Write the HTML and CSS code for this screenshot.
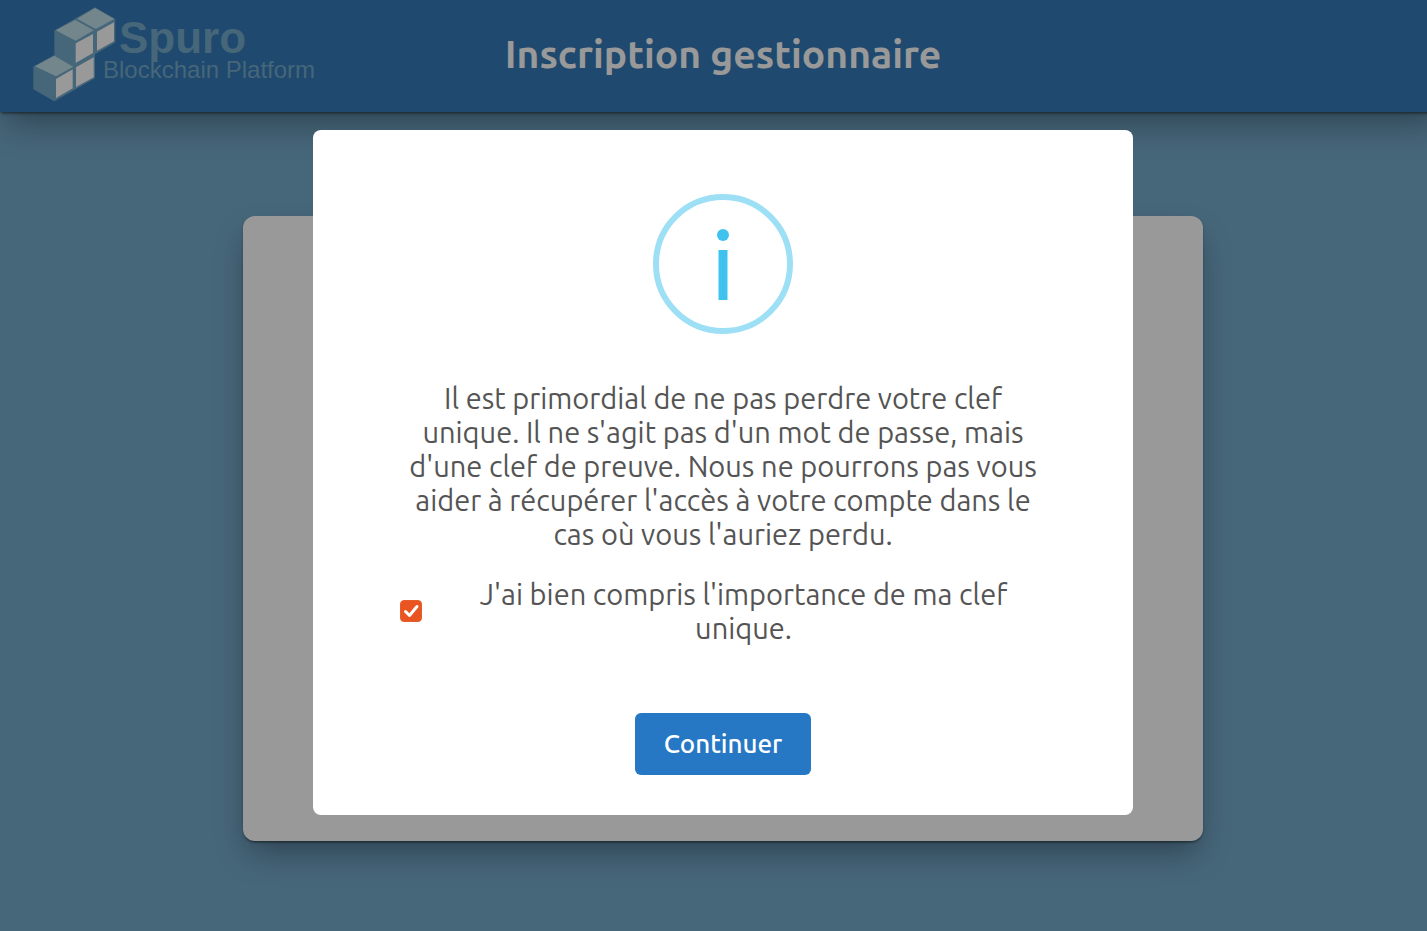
FILE: index.html
```
<!DOCTYPE html>
<html lang="fr">
<head>
<meta charset="utf-8">
<title>Inscription gestionnaire</title>
<link rel="stylesheet" href="styles.css">
</head>
<body>
<div class="page">
  <header class="header">
    <svg class="logo" viewBox="32 4 300 100" role="img" aria-label="Spuro Blockchain Platform">
      <path class="logo-side" d="M95 7.300 115.300 19V42.600L95 54.300V78.300L54.300 101.300 33.300 89.300V66.500L54.300 55V30.600z"/>
      <g class="logo-top">
        <path d="M95 8 114.300 19 95.700 29 77 18.700z"/>
        <path d="M75.300 20 93.700 30.300 75.700 40.700 55.700 30.300z"/>
        <path d="M54.300 55.700 73.300 66.700 56 76.300 35 66.300z"/>
      </g>
      <g class="logo-face">
        <path d="M97 31.700 114 22.300V41.300L97 50.700z"/>
        <path d="M75.700 43.300 93 34V53L75.700 63z"/>
        <path d="M76 67.300 93.700 57.300V77.300L76 87z"/>
        <path d="M56 79 72.700 69.300V88.300L56 98z"/>
      </g>
      <text class="logo-name" x="119" y="53">Spuro</text>
      <text class="logo-tagline" x="103" y="78">Blockchain Platform</text>
    </svg>
    <h1 class="title">Inscription gestionnaire</h1>
  </header>
  <main class="content">
    <section class="card"></section>
  </main>
</div>
<div class="overlay">
  <div class="modal" role="dialog" aria-modal="true" aria-describedby="message">
    <svg class="info-icon" viewBox="0 0 140 140" aria-hidden="true">
      <circle class="info-ring" cx="70" cy="70" r="67"/>
      <circle class="info-mark" cx="70" cy="41" r="6"/>
      <path class="info-mark" d="M65.500 56h9v50h-9z"/>
    </svg>
    <p class="message" id="message">Il est primordial de ne pas perdre votre clef unique. Il ne s'agit pas d'un mot de passe, mais d'une clef de preuve. Nous ne pourrons pas vous aider à récupérer l'accès à votre compte dans le cas où vous l'auriez perdu.</p>
    <div class="consent">
      <span class="check">
        <input class="check-input" type="checkbox" id="understood" checked>
        <svg class="check-mark" viewBox="0 0 22 22" aria-hidden="true"><path d="M5.500 11.500 9.500 15.500 17 6.500"/></svg>
      </span>
      <label class="consent-label" for="understood">J'ai bien compris l'importance de ma clef unique.</label>
    </div>
    <button class="confirm" type="button">Continuer</button>
  </div>
</div>
</body>
</html>
```
FILE: styles.css
```
* { box-sizing: border-box; }
body {
  margin: 0;
  min-height: 100vh;
  overflow: hidden;
  background: #75aacb;
  font-family: "Ubuntu", "Noto Sans", sans-serif;
}
.page { margin-right: -19px; }
.header {
  display: grid;
  grid-template-columns: 1fr auto 1fr;
  align-items: center;
  height: 112px;
  padding: 0 32px 4px;
  background: #347ab7;
  box-shadow: 0 2px 3px -1px rgba(0, 0, 0, .6), 0 16px 32px -6px rgba(0, 0, 0, .35);
}
.logo { width: 300px; height: 100px; }
.logo-side { fill: #75aacb; }
.logo-top { fill: #bfe0ea; }
.logo-face { fill: #fff; }
.logo-name { fill: #75aacb; font: bold 44px "Liberation Sans", sans-serif; }
.logo-tagline { fill: #75aacb; font: 24px "Liberation Sans", sans-serif; }
.title {
  margin: 0;
  color: #fff;
  font-size: 39px;
  line-height: 48px;
  font-weight: 700;
}
.content { padding: 104px 20px; }
.card {
  width: 100%;
  max-width: 960px;
  min-height: 625px;
  margin: 0 auto;
  border-radius: 12px;
  background: #fff;
  box-shadow: 0 2px 3px -1px rgba(0, 0, 0, .6), 0 16px 32px -6px rgba(0, 0, 0, .35);
}
.overlay {
  position: fixed;
  inset: 0 -19px 0 0;
  display: flex;
  align-items: center;
  justify-content: center;
  padding-top: 14px;
  background: rgba(0, 0, 0, .4);
}
.modal {
  display: flex;
  flex-direction: column;
  align-items: center;
  width: 820px;
  max-width: 100%;
  padding: 64px 84px 40px;
  border-radius: 8px;
  background: #fff;
  color: #545454;
  font-size: 29px;
  line-height: 34px;
  text-align: center;
}
.info-icon { width: 140px; height: 140px; }
.info-ring { fill: none; stroke: #9de0f6; stroke-width: 6; }
.info-mark { fill: #3fc3ee; }
.message { margin: 47px 0 26px; }
.consent {
  display: flex;
  align-items: center;
  width: 100%;
  padding-left: 3px;
  gap: 16px;
}
.check { display: grid; width: 22px; height: 22px; }
.check-input, .check-mark { grid-area: 1 / 1; width: 22px; height: 22px; margin: 0; }
.check-input {
  appearance: none;
  border: 1px solid #e4602f;
  border-radius: 4px;
  background: #e95420;
}
.check-mark {
  pointer-events: none;
  fill: none;
  stroke: #fff;
  stroke-width: 3;
  stroke-linecap: round;
  stroke-linejoin: round;
}
.consent-label { flex: 1; }
.confirm {
  margin-top: 68px;
  padding: 14px 29px;
  border: 0;
  border-radius: 6px;
  background: #2778c4;
  color: #fff;
  font: 500 26px/34px "Ubuntu", "Noto Sans", sans-serif;
}
```
